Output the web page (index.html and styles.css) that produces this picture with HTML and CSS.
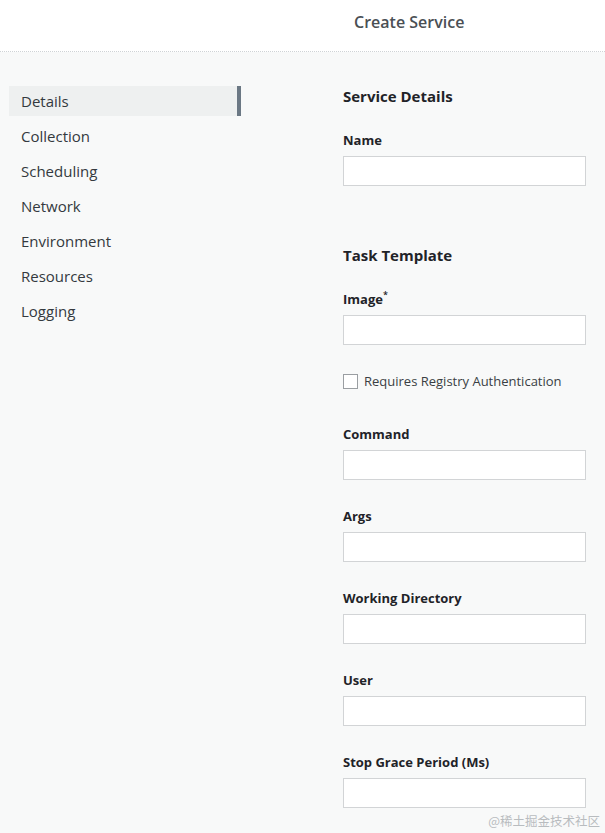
FILE: index.html
```html
<!DOCTYPE html>
<html>
<head>
<meta charset="utf-8">
<link rel="stylesheet" href="styles.css">
</head>
<body>
<header class="topbar">
  <h1 class="title">Create Service</h1>
</header>
<div class="layout">
  <nav class="sidenav">
    <a class="nav-item active">Details</a>
    <a class="nav-item">Collection</a>
    <a class="nav-item">Scheduling</a>
    <a class="nav-item">Network</a>
    <a class="nav-item">Environment</a>
    <a class="nav-item">Resources</a>
    <a class="nav-item">Logging</a>
  </nav>
  <main class="form">
    <h2 class="section-title">Service Details</h2>
    <div class="field">
      <label class="label">Name</label>
      <input class="input" type="text">
    </div>
    <h2 class="section-title second">Task Template</h2>
    <div class="field">
      <label class="label">Image<sup class="req">*</sup></label>
      <input class="input" type="text">
    </div>
    <div class="check-row">
      <span class="checkbox"></span>
      <span class="check-label">Requires Registry Authentication</span>
    </div>
    <div class="field spaced">
      <label class="label">Command</label>
      <input class="input" type="text">
    </div>
    <div class="field">
      <label class="label">Args</label>
      <input class="input" type="text">
    </div>
    <div class="field">
      <label class="label">Working Directory</label>
      <input class="input" type="text">
    </div>
    <div class="field">
      <label class="label">User</label>
      <input class="input" type="text">
    </div>
    <div class="field">
      <label class="label">Stop Grace Period (Ms)</label>
      <input class="input" type="text">
    </div>
  </main>
</div>
<div class="watermark">@稀土掘金技术社区</div>
</body>
</html>
```
FILE: styles.css
```css
html, body {
  margin: 0;
  padding: 0;
}
body {
  background: #f8f9f9;
  font-family: "Open Sans", "Noto Sans", sans-serif;
  color: #2b2f33;
  height: 833px;
  overflow: hidden;
  position: relative;
}
.topbar {
  background: #ffffff;
  border-bottom: 1px dotted #cfd3d6;
  display: flex;
  align-items: center;
  padding-left: 354px;
  box-sizing: border-box;
  height: 52px;
}
.title {
  margin: 0;
  font-size: 16px;
  font-weight: 600;
  color: #4a4f54;
  line-height: 22px;
  position: relative;
  top: -4px;
}
.layout {
  display: flex;
  padding-top: 34px;
}
.sidenav {
  margin-left: 9px;
  width: 232px;
  display: flex;
  flex-direction: column;
  gap: 5px;
}
.nav-item {
  display: block;
  height: 30px;
  line-height: 30px;
  padding-left: 12px;
  font-size: 15px;
  color: #34393e;
  box-sizing: border-box;
}
.nav-item.active {
  background: #eef0f0;
  border-right: 4px solid #6b7884;
}
.form {
  margin-left: 102px;
  width: 243px;
  display: flex;
  flex-direction: column;
}
.section-title {
  margin: 0;
  font-size: 15px;
  font-weight: 700;
  line-height: 20px;
  color: #1f2328;
}
.section-title.second {
  margin-top: 59px;
}
.field {
  display: flex;
  flex-direction: column;
  margin-top: 25px;
}
.field + .field {
  margin-top: 27px;
}
.field.spaced {
  margin-top: 35px;
}
.label {
  font-size: 13px;
  font-weight: 700;
  line-height: 18px;
  color: #1f2328;
  margin-bottom: 7px;
}
.req {
  font-size: 9px;
  line-height: 0;
  font-weight: 600;
  position: relative;
  top: -1px;
}
.input {
  height: 30px;
  box-sizing: border-box;
  border: 1px solid #d2d4d6;
  background: #ffffff;
  margin: 0;
  padding: 0 8px;
  border-radius: 0;
  font-family: inherit;
}
.check-row {
  display: flex;
  align-items: center;
  gap: 6px;
  margin-top: 27px;
  height: 18px;
}
.checkbox {
  width: 15px;
  height: 15px;
  box-sizing: border-box;
  border: 1px solid #9a9ea2;
  background: #ffffff;
}
.check-label {
  font-size: 13px;
  color: #3a3f44;
  line-height: 18px;
}
.watermark {
  position: absolute;
  right: 5px;
  bottom: 3px;
  font-family: "Noto Sans CJK SC", sans-serif;
  font-size: 12.5px;
  color: #b8bcbf;
}
```
